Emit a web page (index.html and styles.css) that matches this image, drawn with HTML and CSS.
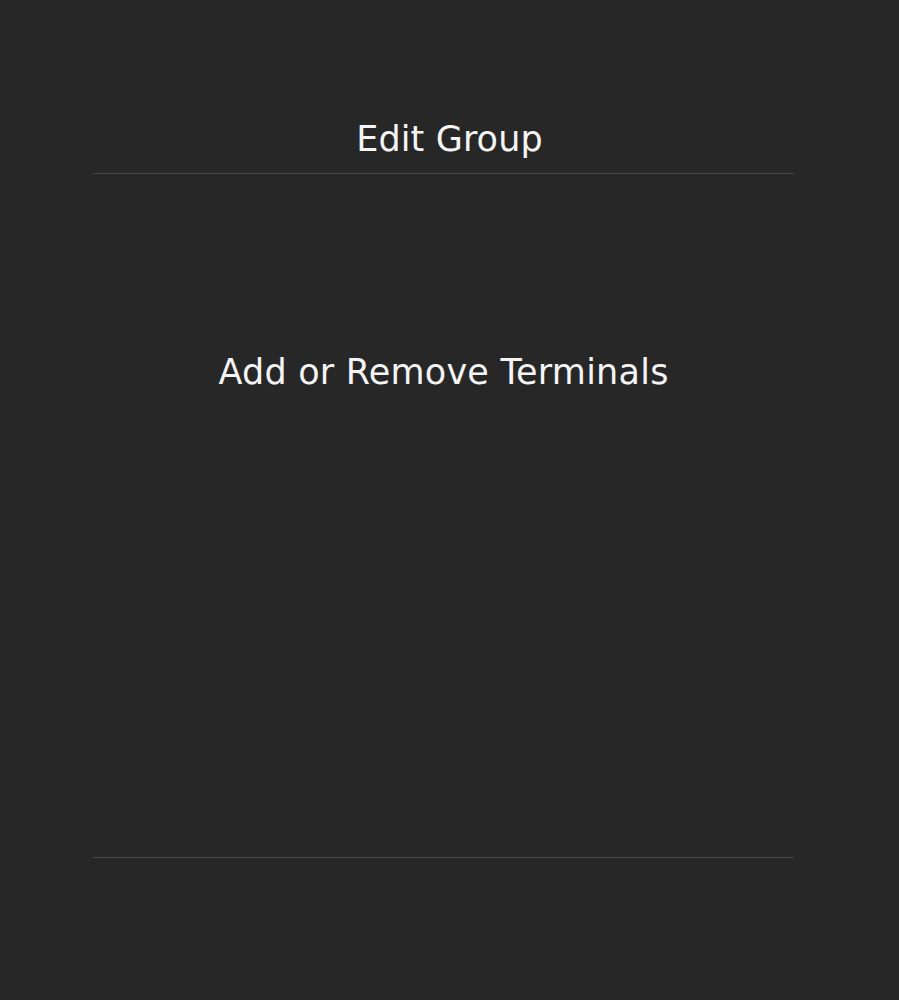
FILE: index.html
```html
<!DOCTYPE html>
<html>
<head>
<meta charset="utf-8">
<link rel="stylesheet" href="styles.css">
</head>
<body>
<h1 class="title">Edit Group</h1>
<section class="panel">
  <h2 class="subtitle">Add or Remove Terminals</h2>
</section>
</body>
</html>
```
FILE: styles.css
```css
html, body {
  margin: 0;
  padding: 0;
  background: #272727;
}
body {
  font-family: "DejaVu Sans", Verdana, sans-serif;
  color: #f4f4f4;
  height: 1000px;
}
.title {
  margin: 0;
  padding-top: 119px;
  font-size: 35px;
  font-weight: normal;
  line-height: 40px;
  letter-spacing: 0.1px;
  text-align: center;
}
.panel {
  box-sizing: border-box;
  width: 701px;
  height: 685px;
  margin: 14px 0 0 93px;
  border-top: 1px solid #484848;
  border-bottom: 1px solid #484848;
}
.subtitle {
  margin: 0;
  padding-top: 178px;
  font-size: 35px;
  font-weight: normal;
  line-height: 40px;
  letter-spacing: 0.22px;
  text-align: center;
}
```
